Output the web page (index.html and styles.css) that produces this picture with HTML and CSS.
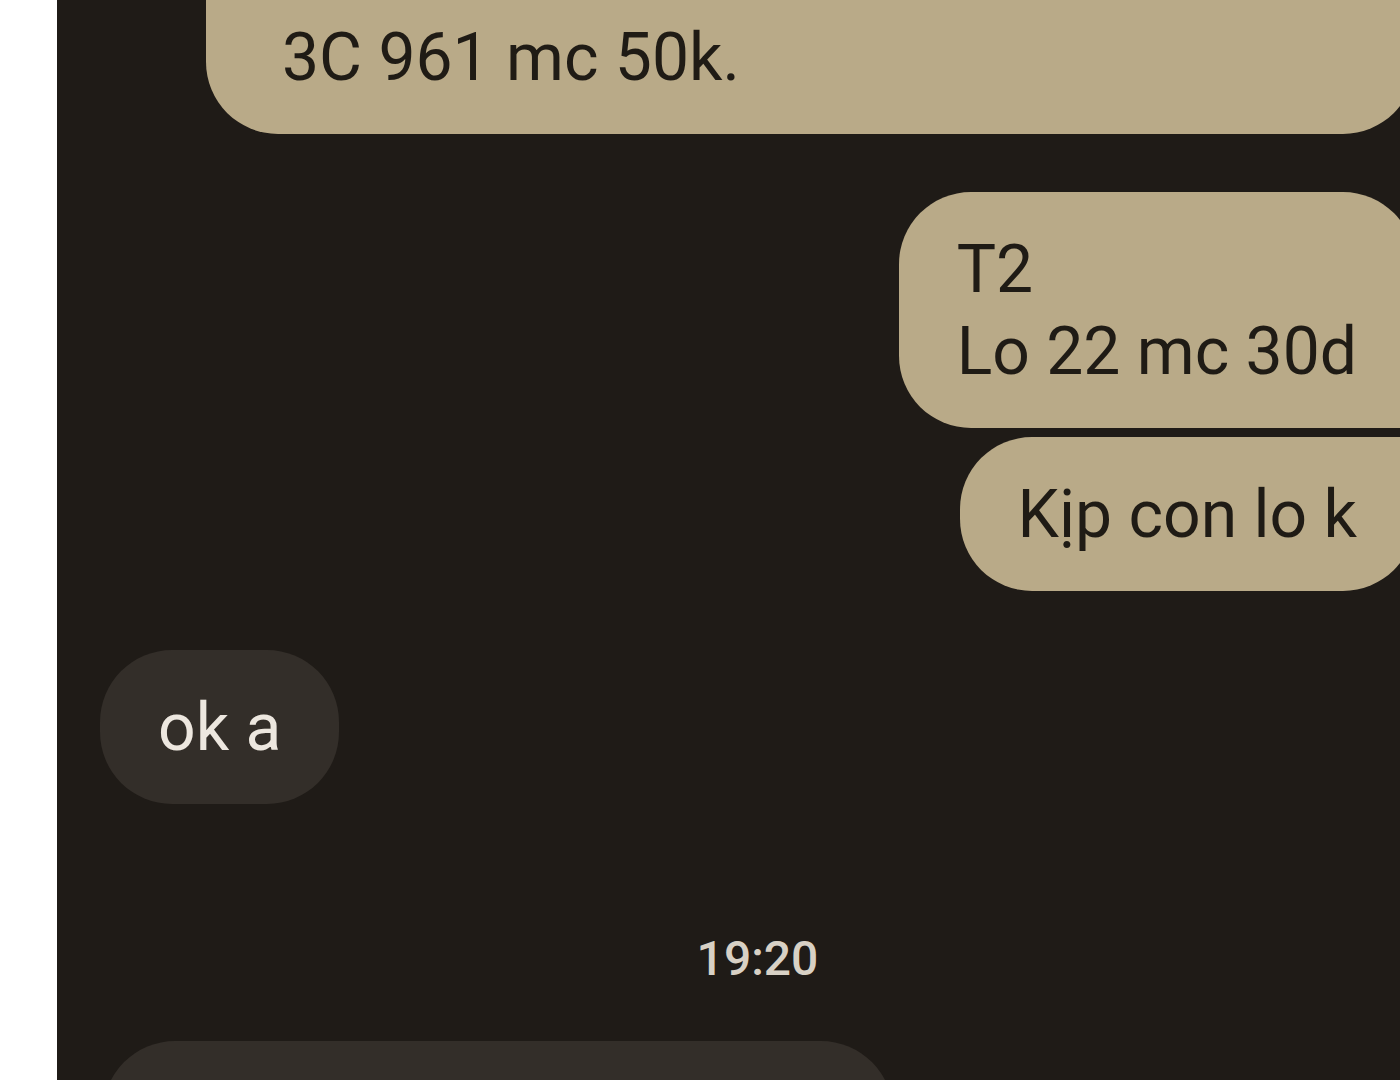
FILE: index.html
```html
<!DOCTYPE html>
<html lang="vi">

<head>
    <meta charset="UTF-8">
    <meta name="viewport" content="width=device-width, initial-scale=1.0">
    <title>Tin nhắn</title>
    <link rel="stylesheet" href="styles.css">
</head>

<body>
    <div class="screen">
        <div class="gutter"></div>
        <div class="chat">
            <div class="bubble sent first wide">
                De 36 mc 20k 63 mc 20k<br>3C 961 mc 50k.
            </div>
            <div class="bubble sent group-top">T2<br>Lo 22 mc 30d</div>
            <div class="bubble sent group-bottom">Kịp con lo k</div>
            <div class="bubble received">ok a</div>
            <div class="time">19:20</div>
            <div class="bubble received tall">Trúng rồi nha</div>
        </div>
    </div>
</body>

</html>
```

FILE: styles.css
```css
body {
    font-family: Roboto, 'Noto Sans', sans-serif;
    background-color: #ffffff;
    margin: 0;
    padding: 0;
    height: 1080px;
    overflow: hidden;
}

.screen {
    display: flex;
    height: 1080px;
}

.gutter {
    width: 57px;
    flex-shrink: 0;
}

.chat {
    width: 1400px;
    flex-shrink: 0;
    box-sizing: border-box;
    padding: 0 42px 0 43px;
    background-color: #1f1b17;
    display: flex;
    flex-direction: column;
    overflow: hidden;
}

.bubble {
    font-size: 66px;
    line-height: 82px;
    padding: 37px 58px 35px;
    border-radius: 72px;
    white-space: nowrap;
    flex-shrink: 0;
}

.sent {
    align-self: flex-end;
    background-color: #b9aa88;
    color: #1f1b15;
    margin-top: 58px;
}

.sent.first {
    margin-top: -102px;
}

.sent.wide {
    width: 1209px;
    box-sizing: border-box;
    padding-left: 76px;
}

.sent.group-top {
    border-bottom-right-radius: 12px;
}

.sent.group-bottom {
    margin-top: 9px;
    border-top-right-radius: 12px;
}

.received {
    align-self: flex-start;
    background-color: #332e29;
    color: #ede7df;
    margin-top: 59px;
}

.received.tall {
    width: 790px;
    box-sizing: border-box;
    margin: 52px 0 0 3px;
    padding-top: 60px;
}

.time {
    text-align: center;
    font-size: 48px;
    line-height: 60px;
    font-weight: 500;
    color: #d8d1c5;
    margin-top: 125px;
}
```
